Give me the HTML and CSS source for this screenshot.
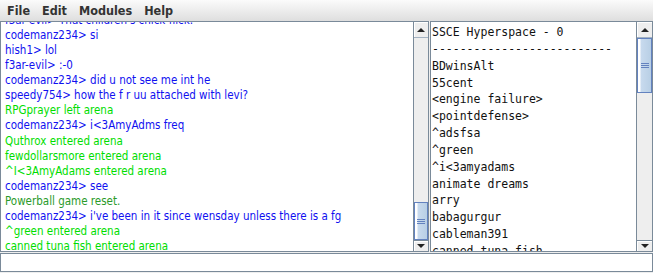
FILE: index.html
```html
<!DOCTYPE html>
<html lang="en">
<head>
  <meta charset="UTF-8">
  <title>SSCE Hyperspace</title>
  <link rel="stylesheet" href="styles.css">
</head>
<body>

  <div class="window">

    <!-- Menu bar -->
    <div class="menubar">
      <span class="menu">File</span>
      <span class="menu">Edit</span>
      <span class="menu">Modules</span>
      <span class="menu">Help</span>
    </div>

    <div class="main">

      <!-- Chat log -->
      <div class="pane chat-pane">
        <div class="view">
          <div class="chat-lines">
            <div class="msg">f3ar-evil&gt; That children's chick flick.</div>
            <div class="msg">codemanz234&gt; si</div>
            <div class="msg">hish1&gt; lol</div>
            <div class="msg">f3ar-evil&gt; :-0</div>
            <div class="msg">codemanz234&gt; did u not see me int he</div>
            <div class="msg">speedy754&gt; how the f r uu attached with levi?</div>
            <div class="arena">RPGprayer left arena</div>
            <div class="msg">codemanz234&gt; i&lt;3AmyAdms freq</div>
            <div class="arena">Quthrox entered arena</div>
            <div class="arena">fewdollarsmore entered arena</div>
            <div class="arena">^I&lt;3AmyAdams entered arena</div>
            <div class="msg">codemanz234&gt; see</div>
            <div class="system">Powerball game reset.</div>
            <div class="msg">codemanz234&gt; i've been in it since wensday unless there is a fg</div>
            <div class="arena">^green entered arena</div>
            <div class="arena">canned tuna fish entered arena</div>
          </div>
        </div>
        <div class="scrollbar">
          <div class="arrow up"></div>
          <div class="track">
            <div class="spacer"></div>
            <div class="thumb chat-thumb"><span class="grip"></span></div>
          </div>
          <div class="arrow down"></div>
        </div>
      </div>

      <!-- Player list -->
      <div class="pane list-pane">
        <div class="view">
          <div class="players">
            <div>SSCE Hyperspace - 0</div>
            <div>--------------------------</div>
            <div>BDwinsAlt</div>
            <div>55cent</div>
            <div>&lt;engine failure&gt;</div>
            <div>&lt;pointdefense&gt;</div>
            <div>^adsfsa</div>
            <div>^green</div>
            <div>^i&lt;3amyadams</div>
            <div>animate dreams</div>
            <div>arry</div>
            <div>babagurgur</div>
            <div>cableman391</div>
            <div>canned tuna fish</div>
          </div>
        </div>
        <div class="scrollbar wide">
          <div class="arrow up"></div>
          <div class="track">
            <div class="thumb list-thumb"><span class="grip"></span></div>
            <div class="spacer"></div>
          </div>
          <div class="arrow down"></div>
        </div>
      </div>

    </div>

    <!-- Input line -->
    <div class="input-row">
      <div class="input" contenteditable="true" spellcheck="false"></div>
    </div>

  </div>

</body>
</html>
```

FILE: styles.css
```css
body {
  margin: 0;
  background-color: #eeeeee;
  font-family: "DejaVu Sans", sans-serif;
}
.window {
  width: 653px;
  height: 273px;
  display: flex;
  flex-direction: column;
  overflow: hidden;
}

/* Menu bar */
.menubar {
  height: 21px;
  display: flex;
  align-items: center;
  padding-left: 1px;
  background: linear-gradient(#fbfbfb, #dedede);
  box-sizing: border-box;
  flex-shrink: 0;
  position: relative;
  z-index: 1;
}
.menu {
  font-family: "DejaVu Sans Condensed", "DejaVu Sans", sans-serif;
  font-stretch: condensed;
  font-size: 12.5px;
  font-weight: bold;
  color: #333333;
  padding: 0 6px;
}

/* Split area */
.main {
  display: flex;
  gap: 1px;
  height: 231px;
  flex-shrink: 0;
}
.pane {
  display: flex;
  border: 1px solid #7a8a99;
  background-color: white;
  box-sizing: border-box;
  height: 100%;
}
.chat-pane {
  width: 429px;
}
.list-pane {
  flex: 1;
}
.view {
  flex: 1;
  overflow: hidden;
}

/* Chat text */
.chat-lines {
  margin-top: -9px;
  padding-left: 4px;
  font-family: "DejaVu Sans Condensed", "DejaVu Sans", sans-serif;
  font-stretch: condensed;
  font-size: 11.5px;
  line-height: 15.07px;
  white-space: nowrap;
}
.msg {
  color: #1010f0;
}
.arena {
  color: #00dd00;
}
.system {
  color: #2a9a2a;
}

/* Player list */
.players {
  padding: 2px 0 0 1px;
  font-family: "DejaVu Sans Mono", monospace;
  font-size: 11.5px;
  line-height: 16.85px;
  color: #111111;
  white-space: nowrap;
}

/* Metal style scrollbar */
.scrollbar {
  width: 14px;
  display: flex;
  flex-direction: column;
  border-left: 1px solid #7a8a99;
  background-color: #eeeeee;
}
.scrollbar.wide {
  width: 15px;
}
.arrow {
  height: 15px;
  display: flex;
  align-items: center;
  justify-content: center;
  background-color: #eeeeee;
  box-shadow: inset 1px 1px 0 white;
  flex-shrink: 0;
}
.arrow.up {
  border-bottom: 1px solid #a3b2c2;
}
.arrow.down {
  height: 11px;
  border-top: 1px solid #7a8a99;
  align-items: flex-start;
  padding-top: 3px;
  box-sizing: border-box;
}
.arrow.up::before {
  content: "";
  border-left: 4px solid transparent;
  border-right: 4px solid transparent;
  border-bottom: 4px solid #222222;
}
.arrow.down::before {
  content: "";
  border-left: 4px solid transparent;
  border-right: 4px solid transparent;
  border-top: 4px solid #222222;
}
.track {
  flex: 1;
  display: flex;
  flex-direction: column;
}
.spacer {
  flex: 1;
}
.thumb {
  display: flex;
  align-items: center;
  justify-content: center;
  border: 1px solid #6382bf;
  background: linear-gradient(90deg, #ffffff 0, #ffffff 2px, #c8daee 3px, #b8cfe5 100%);
  box-sizing: border-box;
}
.chat-thumb {
  height: 38px;
}
.list-thumb {
  height: 55px;
}
.grip {
  width: 8px;
  height: 5px;
  background: repeating-linear-gradient(#6382bf 0, #6382bf 1px, transparent 1px, transparent 2px);
}

/* Input line */
.input-row {
  padding-top: 1px;
}
.input {
  height: 19px;
  border: 1px solid #7a8a99;
  background-color: white;
  box-sizing: border-box;
  outline: none;
}
```
